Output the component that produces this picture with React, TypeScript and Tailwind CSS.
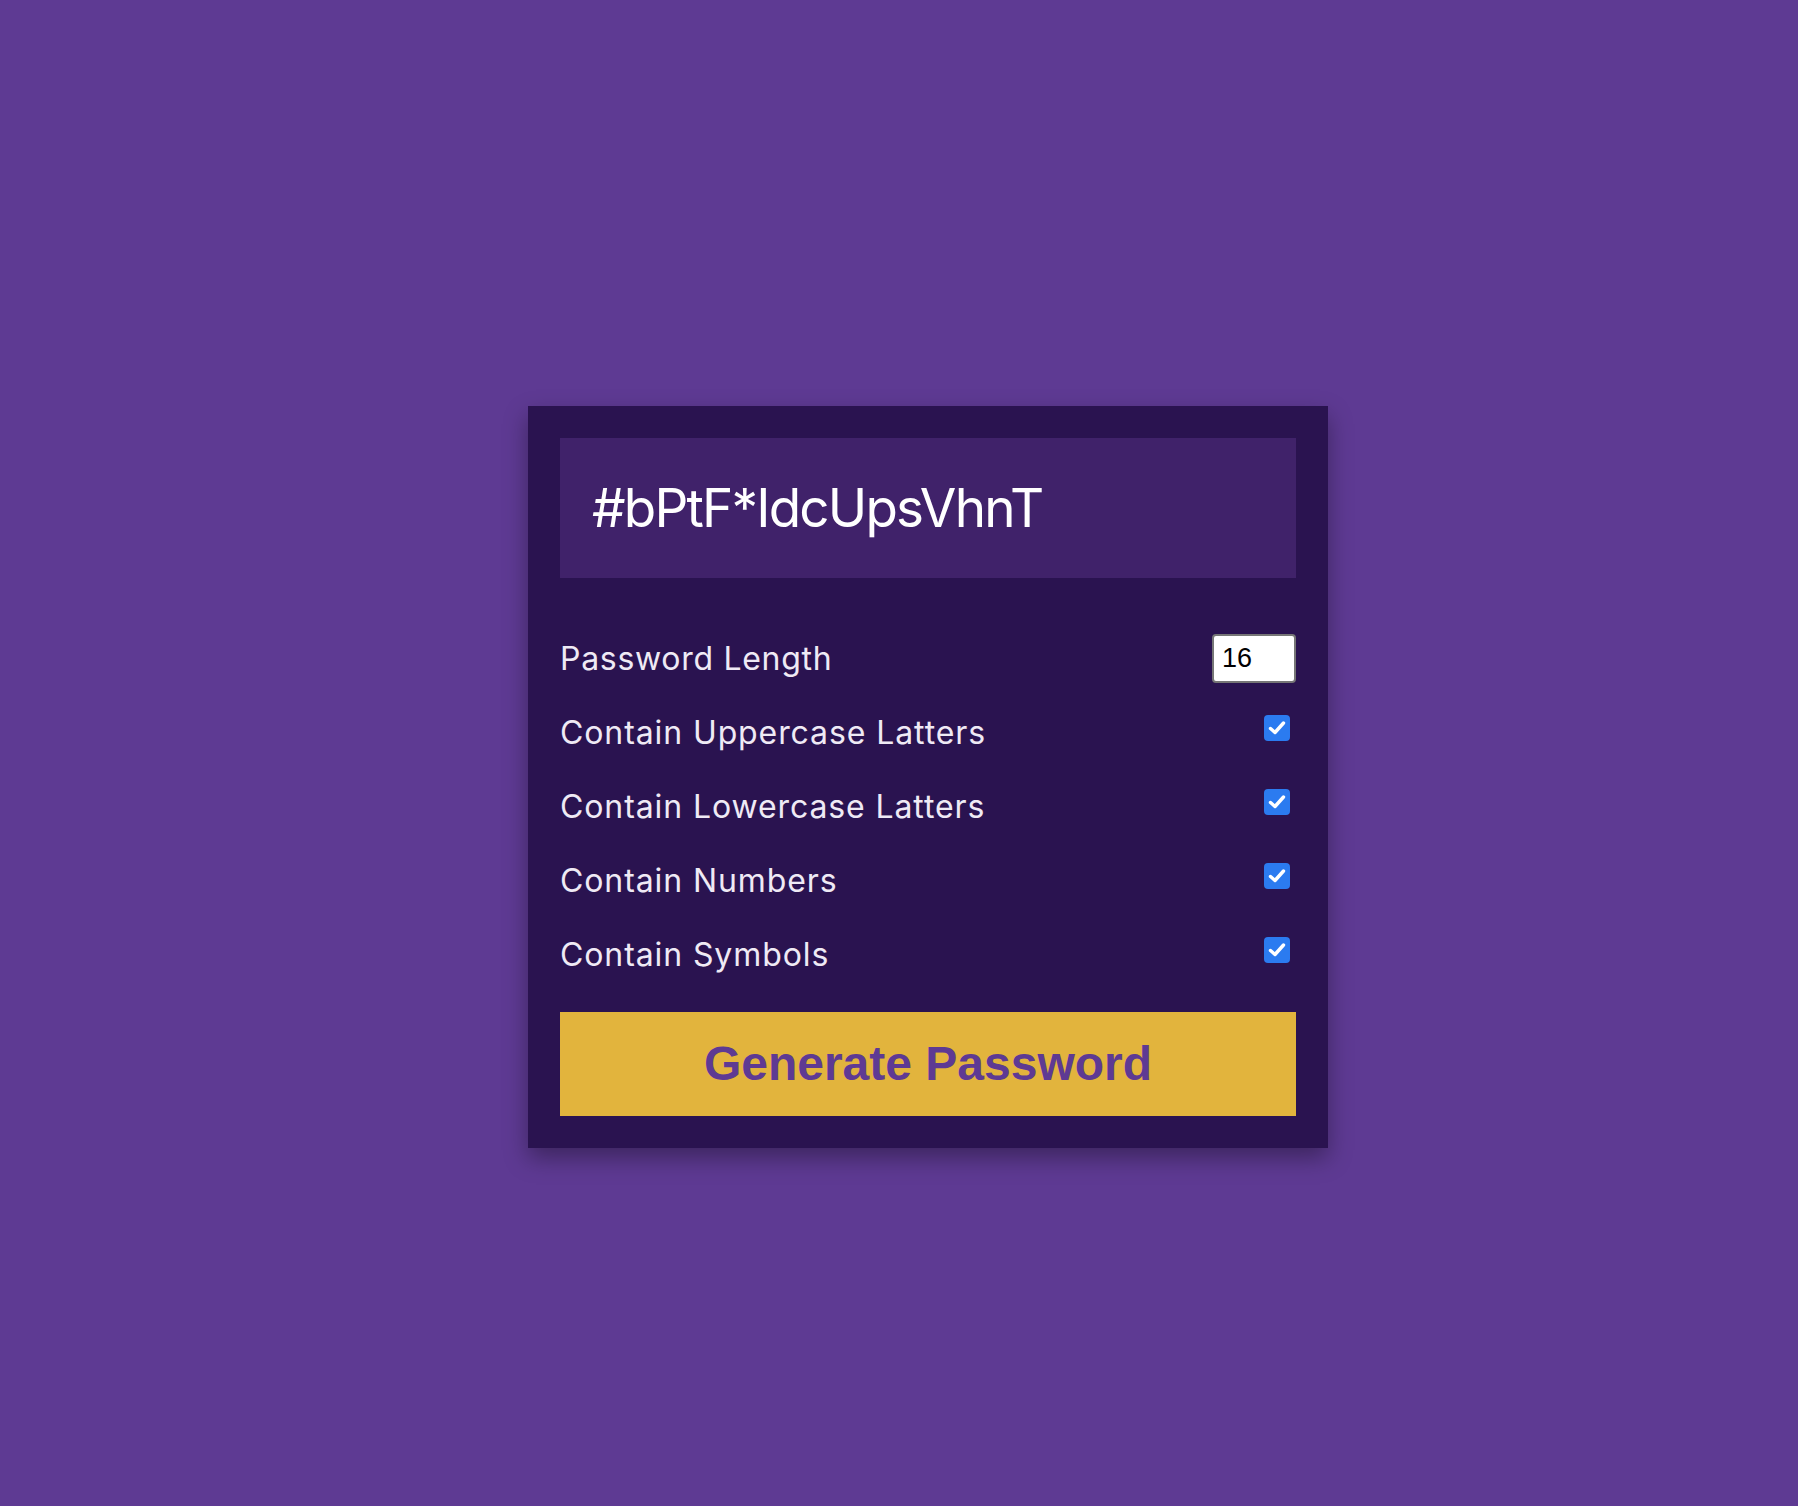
import React from "react";

const Check = () => (
  <div className="w-[26px] h-[26px] rounded-[4px] bg-[#2b7bf0] flex items-center justify-center mr-[6px] mb-[8px]">
    <svg width="18" height="16" viewBox="0 0 18 16">
      <path d="M2.5 8.5 L7 12.5 L15.5 3" fill="none" stroke="white" strokeWidth="3.4" strokeLinecap="round" strokeLinejoin="round" />
    </svg>
  </div>
);

const rows = [
  "Contain Uppercase Latters",
  "Contain Lowercase Latters",
  "Contain Numbers",
  "Contain Symbols",
];

export default function App() {
  return (
    <div className="min-h-[1506px] w-full bg-[#5e3a93] pt-[406px] pl-[528px]">
      <div className="w-[800px] bg-[#2a1350] p-[32px] shadow-[0_10px_22px_rgba(0,0,0,0.35)]">
        <div className="h-[140px] bg-[#40226a] flex items-center px-[32px]">
          <span className="text-white text-[53px] leading-none tracking-[-1.8px]" style={{ fontFamily: "Inter, 'Noto Sans', sans-serif" }}>
            #bPtF*IdcUpsVhnT
          </span>
        </div>
        <div className="mt-[43px]" style={{ fontFamily: "Inter, 'Noto Sans', sans-serif" }}>
          <div className="h-[74px] flex items-center justify-between">
            <span className="text-[#efeaf5] text-[32px] leading-none tracking-[0.7px] pt-[2px]">Password Length</span>
            <div className="w-[84px] h-[49px] border-2 border-[#767676] rounded-[4px] bg-white flex items-center pl-[8px]">
              <span className="text-black text-[27px] leading-none" style={{ fontFamily: "'Liberation Sans', Arial, sans-serif" }}>16</span>
            </div>
          </div>
          {rows.map((r) => (
            <div key={r} className="h-[74px] flex items-center justify-between">
              <span className="text-[#efeaf5] text-[32px] leading-none tracking-[0.9px] pt-[2px]">{r}</span>
              <Check />
            </div>
          ))}
        </div>
        <button className="mt-[21px] w-full h-[104px] bg-[#e2b43d] flex items-center justify-center">
          <span className="text-[#5e3a93] text-[48px] font-bold leading-none" style={{ fontFamily: "'Liberation Sans', Arial, sans-serif" }}>
            Generate Password
          </span>
        </button>
      </div>
    </div>
  );
}
